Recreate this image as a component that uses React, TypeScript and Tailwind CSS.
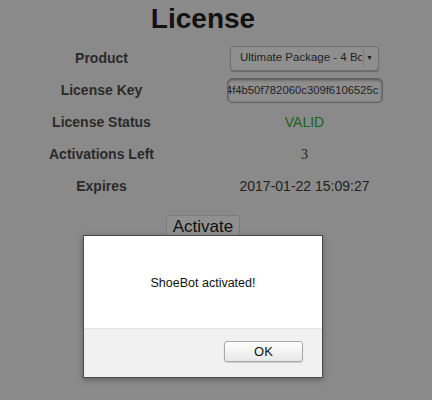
import React from 'react';

const rows: { label: string; value: React.ReactNode }[] = [
  {
    label: 'Product',
    value: (
      <div className="flex h-[25px] w-[149px] items-center justify-between rounded-[4px] border border-[#6f6f6f] bg-[#8f8f8f] pl-[9px] pr-[3px] shadow-[0_1px_1px_rgba(0,0,0,0.25)]">
        <span className="w-[122px] overflow-hidden whitespace-nowrap text-[11.5px] text-[#1f1f1f]">Ultimate Package - 4 Bo</span>
        <span className="flex h-[19px] w-[12px] items-center justify-center border-l border-[#7a7a7a] text-[7px] text-[#1f1f1f]">▼</span>
      </div>
    ),
  },
  {
    label: 'License Key',
    value: (
      <div className="flex h-[25px] w-[156px] items-center justify-end overflow-hidden rounded-[5px] border border-[#606060] bg-[#8e8e8e] pr-[3px] shadow-[inset_0_1px_3px_rgba(0,0,0,0.45)]">
        <span className="whitespace-nowrap text-[11.3px] text-[#1f1f1f]">4f4b50f782060c309f6106525c</span>
      </div>
    ),
  },
  { label: 'License Status', value: <span className="text-[14px] text-[#1d611d]">VALID</span> },
  {
    label: 'Activations Left',
    value: <span className="text-[14px] text-[#1f1f1f] [font-family:'Liberation_Serif',serif]">3</span>,
  },
  { label: 'Expires', value: <span className="text-[14px] text-[#1f1f1f]">2017-01-22 15:09:27</span> },
];

export default function App() {
  return (
    <div className="relative h-[400px] w-[432px] overflow-hidden bg-[#8a8a8a] [font-family:'Liberation_Sans',Arial,sans-serif]">
      <div className="w-[406px] pt-[3px]">
        <h1 className="text-center text-[28px] font-bold leading-[32px] text-[#121212]">License</h1>
        <div className="mt-[7px] grid grid-cols-2">
          {rows.map((row) => (
            <React.Fragment key={row.label}>
              <div className="flex h-[32px] items-center justify-center text-[14px] font-bold text-[#2a2a2a]">{row.label}</div>
              <div className="flex h-[32px] items-center justify-center">{row.value}</div>
            </React.Fragment>
          ))}
        </div>
        <div className="mt-[13px] flex justify-center">
          <button className="h-[24px] rounded-[3px] border border-[#7a7a7a] bg-[#909090] px-[6px] text-[17px] leading-[22px] text-[#111]">
            Activate
          </button>
        </div>
      </div>

      <div className="absolute left-[83px] top-[235px] flex h-[143px] w-[240px] flex-col border border-[#4a4a4a] bg-white shadow-[0_2px_6px_rgba(0,0,0,0.3)]">
        <div className="flex h-[93px] items-center justify-center border-b border-[#e2e2e2] pt-[2px] text-[12.5px] text-[#111]">
          ShoeBot activated!
        </div>
        <div className="flex flex-1 items-start justify-end bg-[#f1f1f1] pr-[19px] pt-[12px]">
          <button className="flex h-[21px] w-[79px] items-center justify-center rounded-[3px] border border-[#a9a9a9] bg-gradient-to-b from-white to-[#e8e8e8] text-[13px] text-[#111] shadow-[0_1px_1px_rgba(0,0,0,0.15)]">
            OK
          </button>
        </div>
      </div>
    </div>
  );
}
